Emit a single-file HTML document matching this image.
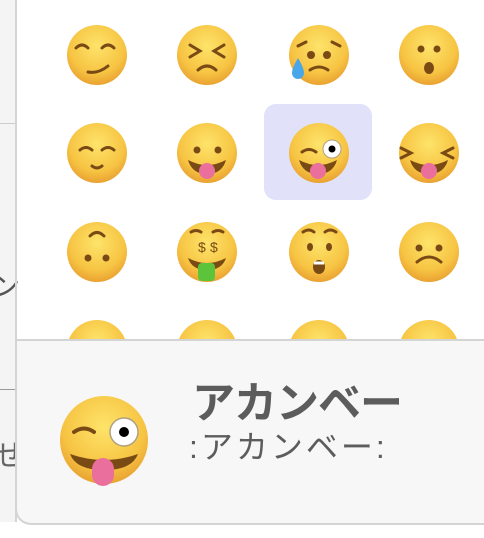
<!DOCTYPE html>
<html><head><meta charset="utf-8"><style>
html,body{margin:0;padding:0;width:484px;height:538px;overflow:hidden;background:#fff;font-family:"Liberation Sans","Noto Sans CJK JP",sans-serif}
.left{position:absolute;left:0;top:0;width:15px;height:522px;background:#f4f4f4}
.vb{position:absolute;left:15px;top:0;width:2px;height:522px;background:#d4d4d4}
.hl{position:absolute;left:264px;top:104px;width:108px;height:96px;background:#e1e1fa;border-radius:12px}
.foot{position:absolute;left:15px;top:339px;width:480px;height:182px;background:#f7f7f7;border:2px solid #d4d4d4;border-right:none;border-bottom-left-radius:16px}
.t1{position:absolute;left:192px;top:379px;font-size:43px;font-weight:bold;color:#5c5c5c;white-space:nowrap;line-height:50px;letter-spacing:-1px}
.t2{position:absolute;left:189px;top:428px;font-size:32px;color:#5c5c5c;white-space:nowrap;letter-spacing:3px;line-height:38px}
svg{position:absolute;left:0;top:0}
</style></head><body>
<div class="left"></div>
<div style="position:absolute;left:0;top:123px;width:15px;height:1px;background:#ccc"></div>
<div style="position:absolute;left:0;top:389px;width:15px;height:1px;background:#999"></div>
<div class="hl"></div>
<svg width="484" height="538">
<defs>
<radialGradient id="g" cx="50%" cy="35%" r="65%"><stop offset="0" stop-color="#fde46a"/><stop offset=".7" stop-color="#f7c443"/><stop offset="1" stop-color="#e9a232"/></radialGradient>
</defs>
<g fill="url(#g)">
<circle cx="97" cy="55" r="30"/><circle cx="207" cy="55" r="30"/><circle cx="319" cy="55" r="30"/><circle cx="429" cy="55" r="30"/>
<circle cx="97" cy="153" r="30"/><circle cx="207" cy="153" r="30"/><circle cx="319" cy="153" r="30"/><circle cx="429" cy="153" r="30"/>
<circle cx="97" cy="252" r="30"/><circle cx="207" cy="252" r="30"/><circle cx="319" cy="252" r="30"/><circle cx="429" cy="252" r="30"/>
<circle cx="97" cy="350" r="30"/><circle cx="207" cy="350" r="30"/><circle cx="319" cy="350" r="30"/><circle cx="429" cy="350" r="30"/>
</g>
<g stroke="#7a4a14" stroke-width="3" fill="none" stroke-linecap="round">
<path d="M76 48q6-6 12 0M102 48q6-6 12 0M88 72q10 2 20-6"/>
<path d="M190 45l10 6-10 6M224 45l-10 6 10 6M198 70q9-8 18 0"/>
<path d="M306 42l-8 4M332 42l8 4M310 70q9-6 18 0"/>
<path d="M80 150q6-5 12 0M102 150q6-5 12 0M92 166q5 4 10 0"/>
<path d="M401 148l10 5-10 5M453 148l-10 5 10 5"/>
<path d="M90 236q7-7 14 0M201 232q-5-3-10 0M223 232q-5-3-10 0M303 232q6-4 11 0M325 232q5-4 11 0M417 262q12-10 24 0M302 152q7-5 14 0"/>
</g>
<g fill="#7a4a14">
<circle cx="311" cy="55" r="4"/><circle cx="327" cy="55" r="4"/><circle cx="421" cy="49" r="3.5"/><circle cx="437" cy="49" r="3.5"/><ellipse cx="429" cy="68" rx="5" ry="6"/>
<circle cx="197" cy="150" r="3.5"/><circle cx="218" cy="150" r="3.5"/>
<circle cx="88" cy="258" r="3.5"/><circle cx="106" cy="258" r="3.5"/>
<ellipse cx="310" cy="247" rx="3" ry="4"/><ellipse cx="329" cy="247" rx="3" ry="4"/><ellipse cx="319" cy="267" rx="6" ry="7"/>
<circle cx="419" cy="248" r="3.5"/><circle cx="439" cy="248" r="3.5"/>
<path d="M188 160q19 10 38 0q-4 14-19 14t-19-14zM299 160q19 10 38 0q-4 14-19 14t-19-14zM410 160q19 10 38 0q-4 14-19 14t-19-14zM188 258q19 10 38 0q-4 12-19 12t-19-12z"/>
</g>
<g fill="#ea6f9c"><rect x="199" y="163" width="16" height="16" rx="8"/><rect x="310" y="163" width="16" height="16" rx="8"/><rect x="421" y="163" width="16" height="16" rx="8"/></g>
<circle cx="332" cy="149" r="9" fill="#fff" stroke="#b0a080"/><circle cx="332" cy="149" r="3.5" fill="#000"/>
<path d="M298 58q-6 10-6 15a6 6 0 0 0 12 0q0-5-6-15z" fill="#49a6e8"/>
<rect x="198" y="263" width="17" height="18" rx="4" fill="#5cc43a"/>
<text x="198" y="252" font-size="14" fill="#7a4a14" font-family="Liberation Sans">$</text><text x="210" y="252" font-size="14" fill="#7a4a14" font-family="Liberation Sans">$</text>
<path d="M314 263h10" stroke="#fff" stroke-width="3"/>
<text x="-8" y="296" font-size="28" fill="#555" font-family="Noto Sans CJK JP">ン</text>
<text x="-6" y="466" font-size="30" fill="#666" font-family="Noto Sans CJK JP">せ</text>
</svg>
<div class="vb"></div>
<div class="foot"></div>
<svg width="484" height="538">
<circle cx="104" cy="440" r="44" fill="url(#g)"/>
<path d="M74 432q10-7 20 0" stroke="#7a4a14" stroke-width="4" fill="none" stroke-linecap="round"/>
<circle cx="124" cy="432" r="14" fill="#fff" stroke="#b0a080" stroke-width="1.5"/><circle cx="124" cy="432" r="5" fill="#000"/>
<path d="M70 454q34 12 68 0q-6 16-34 16t-34-16z" fill="#7a4a14"/>
<rect x="92" y="458" width="22" height="28" rx="11" fill="#ea6f9c"/>
</svg>
<div class="t1">アカンベー</div>
<div class="t2">:アカンベー:</div>
</body></html>
